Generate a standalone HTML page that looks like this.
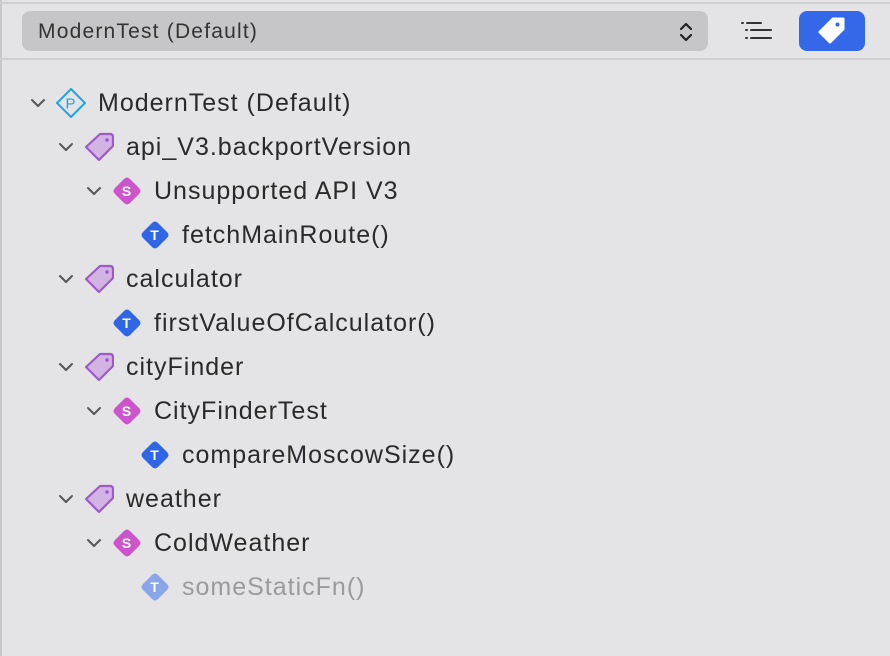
<!DOCTYPE html>
<html><head><style>
body{margin:0;width:890px;height:656px;background:#e4e4e6;font-family:"Liberation Sans",sans-serif;position:relative;overflow:hidden}
.line{position:absolute;left:0;width:890px;height:2px;background:#cfcfd1}
.pop{position:absolute;left:22px;top:11px;width:686px;height:40px;border-radius:8px;background:#c6c6c8;}
.pop span{position:absolute;left:16px;top:9px;font-size:21px;letter-spacing:1.2px;color:#333}
.btn{position:absolute;left:799px;top:11px;width:66px;height:40px;border-radius:8px;background:#3468e8}
.row{position:absolute;height:30px;font-size:25px;letter-spacing:1px;color:#2a2a2a;white-space:nowrap}
.row svg{position:absolute;top:0}
.row .t{position:absolute;top:1px}
</style></head><body>
<div style="position:absolute;left:0;top:0;width:2px;height:656px;background:#c8c8ca"></div>
<div class="line" style="top:2px"></div>
<div class="pop"><span>ModernTest (Default)</span>
<svg style="position:absolute;left:656px;top:9px" width="16" height="24" viewBox="0 0 16 24"><path d="M3 9 L8 4 L13 9 M3 15 L8 20 L13 15" fill="none" stroke="#222" stroke-width="2.2" stroke-linecap="round" stroke-linejoin="round"/></svg></div>
<svg style="position:absolute;left:738px;top:20px" width="36" height="24" viewBox="0 0 36 24"><g stroke="#333" stroke-width="2" stroke-linecap="round"><path d="M4 3h1M9 3h14M8 10h1M13 10h20M8 18h1M13 18h20"/></g></svg>
<div class="btn"><svg style="position:absolute;left:18px;top:6px" width="30" height="28" viewBox="0 0 30 28"><path d="M16 2 L26 2 L26 12 L13 25 L3 15 Z" fill="#fff" stroke="#fff" stroke-width="3" stroke-linejoin="round"/><circle cx="20.5" cy="7.5" r="2" fill="#3468e8"/></svg></div>
<div class="line" style="top:58px"></div>

<div id="tree"></div>
<script>
const rows=[[0,'P','ModernTest (Default)',1],[1,'tag','api_V3.backportVersion',1],[2,'S','Unsupported API V3',1],[3,'T','fetchMainRoute()',0],[1,'tag','calculator',1],[2,'T','firstValueOfCalculator()',0],[1,'tag','cityFinder',1],[2,'S','CityFinderTest',1],[3,'T','compareMoscowSize()',0],[1,'tag','weather',1],[2,'S','ColdWeather',1],[3,'T','someStaticFn()',0,1]];
let h='';
rows.forEach((r,i)=>{const[l,ic,t,ch,dim]=r;const y=88+i*44;const x=28*l;
let s='<div class="row" style="left:'+x+'px;top:'+y+'px;width:700px">';
if(ch)s+='<svg style="left:30px;top:8px" width="16" height="14" viewBox="0 0 16 14"><path d="M2 4 L8 10 L14 4" fill="none" stroke="#555" stroke-width="2" stroke-linecap="round" stroke-linejoin="round"/></svg>';
let icon='';
if(ic=='P')icon='<path d="M15 1 L29 15 L15 29 L1 15Z" fill="none" stroke="#1fa3e8" stroke-width="2"/><text x="15" y="20.5" font-size="15" text-anchor="middle" fill="#1fa3e8" font-family="Liberation Sans">P</text>';
else if(ic=='tag')icon='<path d="M16 2 L26 2 Q29 2 29 5 L29 14 L15 28 L2 15 Z" fill="#d3b3e3" stroke="#9d59c4" stroke-width="2.2" stroke-linejoin="round"/><circle cx="23" cy="8" r="1.8" fill="#9d59c4"/>';
else{const c=ic=='S'?'#cc55cc':(dim?'#8ba6e8':'#2f66e6');icon='<path d="M15 1.5 Q16.5 1.5 18 3 L27 12 Q30 15 27 18 L18 27 Q15 30 12 27 L3 18 Q0 15 3 12 L12 3 Q13.5 1.5 15 1.5Z" fill="'+c+'"/><text x="15" y="20" font-size="14" font-weight="bold" text-anchor="middle" fill="#fff" font-family="Liberation Sans">'+ic+'</text>';}
s+='<svg style="left:56px" width="30" height="30" viewBox="0 0 30 30">'+icon+'</svg>';
s+='<span class="t" style="left:98px;'+(dim?'color:#9a9a9c':'')+'">'+t+'</span></div>';h+=s;});
document.getElementById('tree').innerHTML=h;
</script>
</body></html>
